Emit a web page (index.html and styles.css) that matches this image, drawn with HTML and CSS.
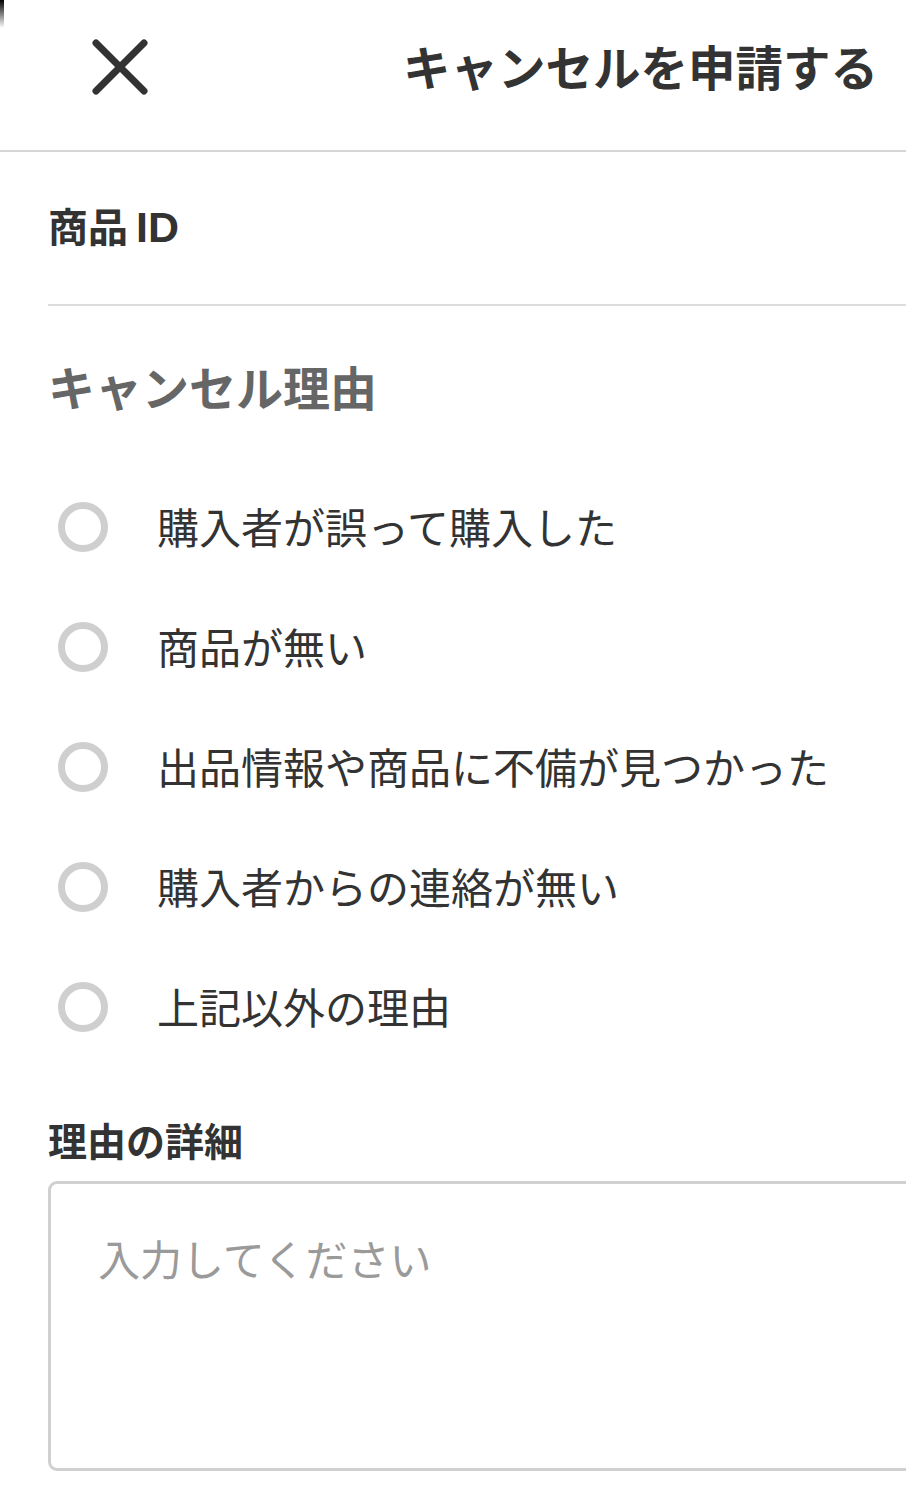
FILE: index.html
```html
<!DOCTYPE html>
<html lang="ja">
<head>
<meta charset="utf-8">
<link rel="stylesheet" href="styles.css">
</head>
<body>
<div class="corner"></div>
<header class="header">
  <button class="close" aria-label="閉じる">
    <svg width="56" height="56" viewBox="0 0 56 56"><path d="M4 4 L52 52 M52 4 L4 52" stroke="#333" stroke-width="7" stroke-linecap="round" fill="none"/></svg>
  </button>
  <h1 class="title">キャンセルを申請する</h1>
</header>
<main class="content">
  <section class="item-id">
    <h2 class="label">商品<span class="latin">ID</span></h2>
  </section>
  <section class="reasons">
    <h2 class="reasons-title">キャンセル理由</h2>
    <ul class="options">
      <li class="option"><span class="radio"></span><span class="option-text">購入者が誤って購入した</span></li>
      <li class="option"><span class="radio"></span><span class="option-text">商品が無い</span></li>
      <li class="option"><span class="radio"></span><span class="option-text">出品情報や商品に不備が見つかった</span></li>
      <li class="option"><span class="radio"></span><span class="option-text">購入者からの連絡が無い</span></li>
      <li class="option"><span class="radio"></span><span class="option-text">上記以外の理由</span></li>
    </ul>
  </section>
  <section class="detail">
    <h2 class="label detail-label">理由の詳細</h2>
    <div class="textarea"><span class="placeholder">入力してください</span></div>
  </section>
</main>
</body>
</html>
```
FILE: styles.css
```css
html, body {
  margin: 0;
  padding: 0;
  background: #fff;
  overflow: hidden;
  width: 906px;
  height: 1485px;
}
body {
  font-family: "Noto Sans CJK JP", "Noto Sans", sans-serif;
  color: #333;
  position: relative;
}
.corner {
  position: absolute;
  top: 0;
  left: 0;
  width: 4px;
  height: 28px;
  background: linear-gradient(#000, rgba(0,0,0,0));
}
.header {
  display: flex;
  align-items: center;
  justify-content: space-between;
  padding: 0 28px 0 92px;
  box-sizing: border-box;
  height: 152px;
  border-bottom: 2px solid #d6d6d6;
}
.close {
  border: 0;
  background: none;
  padding: 0;
  width: 56px;
  height: 56px;
  margin-top: -17px;
}
.close svg { display: block; }
.title {
  margin: 0;
  font-size: 47.5px;
  font-weight: 700;
  line-height: 1;
  margin-top: -19px;
  color: #333;
}
.content {
  padding-left: 48px;
  width: 900px;
}
.item-id {
  height: 152px;
  border-bottom: 2px solid #dcdcdc;
  display: flex;
  align-items: center;
}
.label {
  margin: 0;
  font-size: 40px;
  font-weight: 700;
  line-height: 1;
  color: #333;
}
.item-id .label { margin-top: -2px; }
.latin {
  font-family: "Liberation Sans", "Noto Sans CJK JP", sans-serif;
  font-size: 43px;
  margin-left: 8px;
}
.reasons-title {
  margin: 56px 0 0;
  font-size: 47px;
  font-weight: 700;
  line-height: 1;
  color: #666;
}
.options {
  list-style: none;
  margin: 58px 0 0;
  padding: 0;
}
.option {
  display: flex;
  align-items: center;
  height: 120px;
}
.radio {
  width: 50px;
  height: 50px;
  box-sizing: border-box;
  border: 7px solid #cfcfcf;
  border-radius: 50%;
  margin-left: 10px;
  flex: none;
}
.option-text {
  margin-left: 49px;
  font-size: 42px;
  line-height: 1;
  color: #333;
  margin-top: -2px;
}
.detail { margin-top: 53px; }
.detail-label { font-size: 39px; }
.textarea {
  margin-top: 22px;
  width: 900px;
  height: 290px;
  border: 3px solid #d0d0d0;
  border-radius: 9px;
  box-sizing: border-box;
  padding: 53px 0 0 47px;
}
.placeholder {
  font-size: 42px;
  line-height: 1;
  color: #9a9a9a;
}
```
